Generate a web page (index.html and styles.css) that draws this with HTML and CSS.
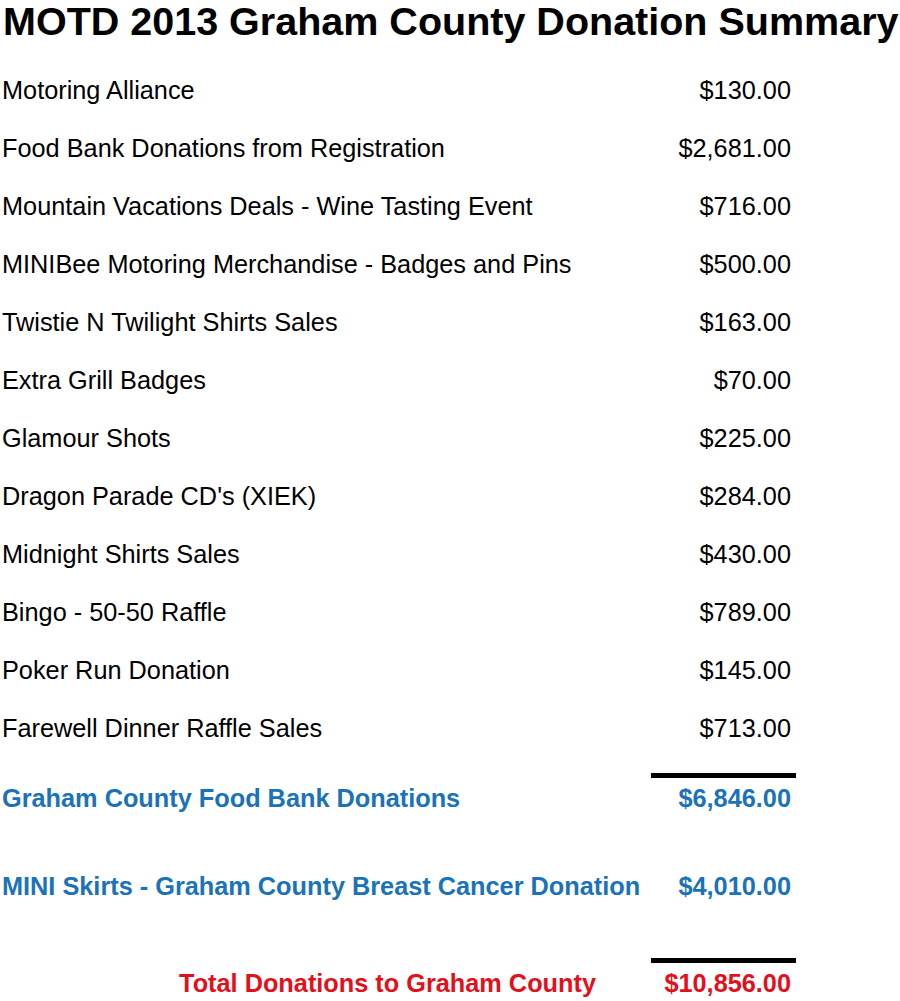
FILE: index.html
```html
<!DOCTYPE html>
<html>
<head>
<meta charset="utf-8">
<link rel="stylesheet" href="styles.css">
</head>
<body>
<h1 class="title">MOTD 2013 Graham County Donation Summary</h1>
<div class="sheet">
  <div class="items">
    <div class="row"><span class="label">Motoring Alliance</span><span class="amount">$130.00</span></div>
    <div class="row"><span class="label">Food Bank Donations from Registration</span><span class="amount">$2,681.00</span></div>
    <div class="row"><span class="label">Mountain Vacations Deals - Wine Tasting Event</span><span class="amount">$716.00</span></div>
    <div class="row"><span class="label">MINIBee Motoring Merchandise - Badges and Pins</span><span class="amount">$500.00</span></div>
    <div class="row"><span class="label">Twistie N Twilight Shirts Sales</span><span class="amount">$163.00</span></div>
    <div class="row"><span class="label">Extra Grill Badges</span><span class="amount">$70.00</span></div>
    <div class="row"><span class="label">Glamour Shots</span><span class="amount">$225.00</span></div>
    <div class="row"><span class="label">Dragon Parade CD's (XIEK)</span><span class="amount">$284.00</span></div>
    <div class="row"><span class="label">Midnight Shirts Sales</span><span class="amount">$430.00</span></div>
    <div class="row"><span class="label">Bingo - 50-50 Raffle</span><span class="amount">$789.00</span></div>
    <div class="row"><span class="label">Poker Run Donation</span><span class="amount">$145.00</span></div>
    <div class="row"><span class="label">Farewell Dinner Raffle Sales</span><span class="amount">$713.00</span></div>
  </div>
  <div class="rule rule-first"></div>
  <div class="row sub sub-first"><span class="label">Graham County Food Bank Donations</span><span class="amount">$6,846.00</span></div>
  <div class="row sub sub-second"><span class="label">MINI Skirts - Graham County Breast Cancer Donation</span><span class="amount">$4,010.00</span></div>
  <div class="rule rule-second"></div>
  <div class="row total"><span class="label">Total Donations to Graham County</span><span class="amount">$10,856.00</span></div>
</div>
</body>
</html>
```

FILE: styles.css
```css
html, body {
  margin: 0;
  padding: 0;
  background: #ffffff;
}

body {
  font-family: "Liberation Sans", Arial, sans-serif;
  color: #000000;
}

.title {
  margin: 0;
  padding-left: 3px;
  font-size: 39.5px;
  line-height: 43px;
  font-weight: bold;
  white-space: nowrap;
}

.sheet {
  padding-left: 2px;
  margin-top: 18px;
}

.row {
  display: grid;
  grid-template-columns: 649px 145px;
  font-size: 25.3px;
  line-height: 58px;
  white-space: nowrap;
}

.amount {
  text-align: right;
  padding-right: 5px;
}

.rule {
  margin-left: 649px;
  width: 145px;
  height: 5px;
  background: #000000;
}

.rule-first {
  margin-top: 16px;
}

.rule-second {
  margin-top: 57px;
}

.sub {
  font-weight: bold;
  color: #1a73b9;
  line-height: 30px;
}

.sub-first {
  margin-top: 5px;
}

.sub-second {
  margin-top: 58px;
}

.total {
  font-weight: bold;
  color: #e3101b;
  line-height: 30px;
  margin-top: 5px;
}

.total .label {
  text-align: right;
  padding-right: 55px;
}
```
